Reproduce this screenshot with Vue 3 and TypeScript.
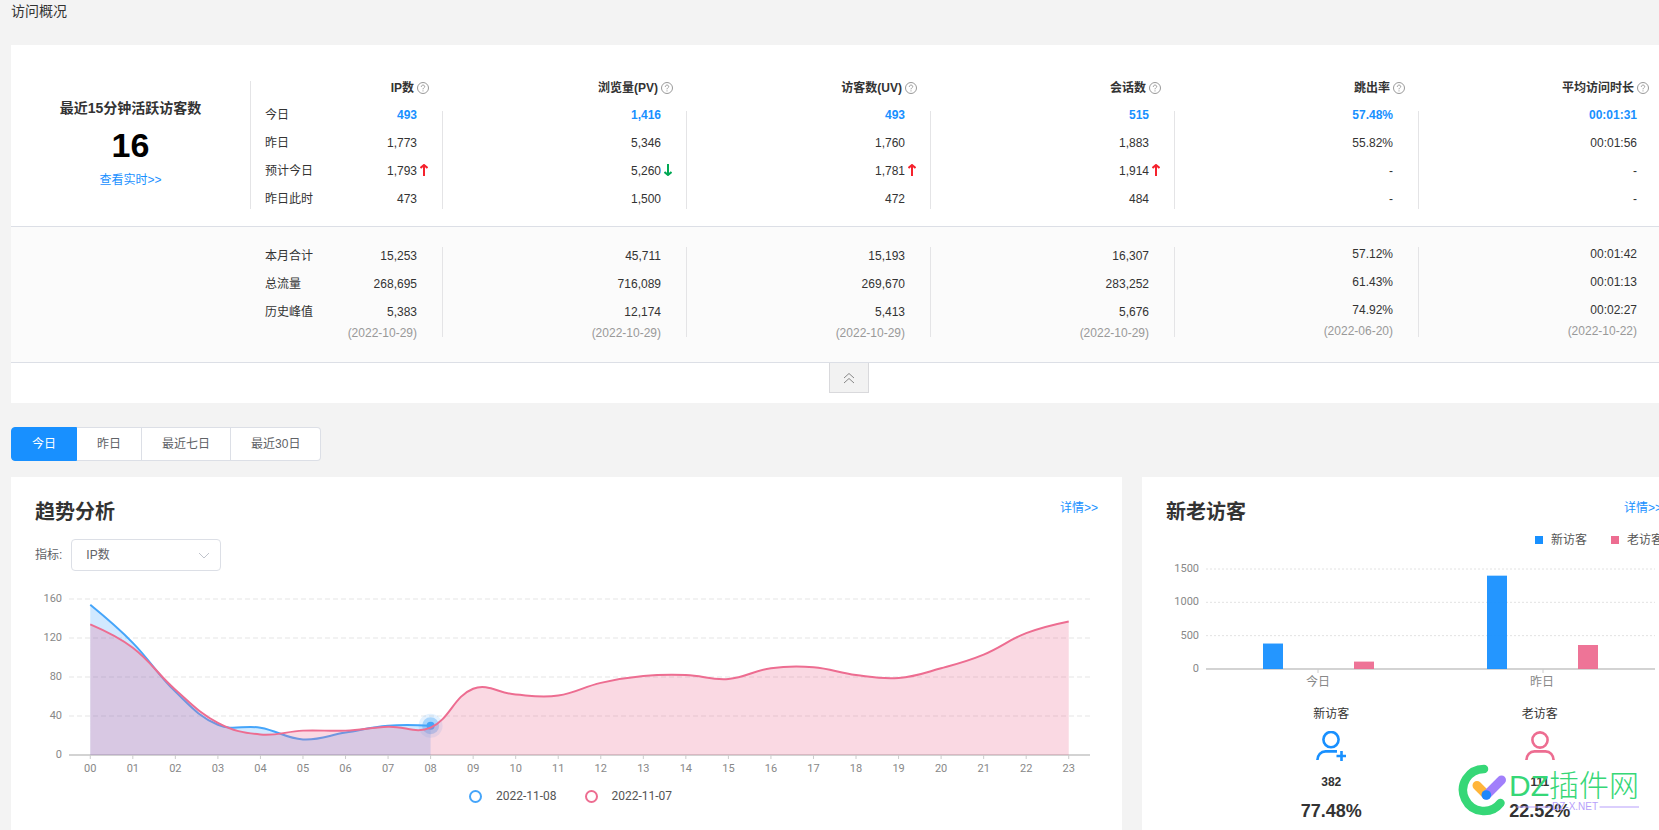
<script setup lang="ts">
import { ref } from 'vue'

type Trend = 'up' | 'down' | null

interface Metric {
  name: string
  recent: string[]
  trend: Trend
  totals: string[]
  peakDate: string
  rate?: boolean
}

const metrics: Metric[] = [
  { name: 'IP数', recent: ['493', '1,773', '1,793', '473'], trend: 'up', totals: ['15,253', '268,695', '5,383'], peakDate: '(2022-10-29)' },
  { name: '浏览量(PV)', recent: ['1,416', '5,346', '5,260', '1,500'], trend: 'down', totals: ['45,711', '716,089', '12,174'], peakDate: '(2022-10-29)' },
  { name: '访客数(UV)', recent: ['493', '1,760', '1,781', '472'], trend: 'up', totals: ['15,193', '269,670', '5,413'], peakDate: '(2022-10-29)' },
  { name: '会话数', recent: ['515', '1,883', '1,914', '484'], trend: 'up', totals: ['16,307', '283,252', '5,676'], peakDate: '(2022-10-29)' },
  { name: '跳出率', recent: ['57.48%', '55.82%', '-', '-'], trend: null, totals: ['57.12%', '61.43%', '74.92%'], peakDate: '(2022-06-20)', rate: true },
  { name: '平均访问时长', recent: ['00:01:31', '00:01:56', '-', '-'], trend: null, totals: ['00:01:42', '00:01:13', '00:02:27'], peakDate: '(2022-10-22)', rate: true },
]
const recentLabels = ['今日', '昨日', '预计今日', '昨日此时']
const totalLabels = ['本月合计', '总流量', '历史峰值']

const ranges = ['今日', '昨日', '最近七日', '最近30日']
const activeRange = ref('今日')
const indicator = ref('IP数')

/* Trend chart geometry, in viewBox units */
const left = 34
const right = 1055
const base = 170
const step = (right - left) / 24
const px = (i: number) => left + step * (i + 0.5)
const py = (v: number) => base - v * 0.975
const hours = Array.from({ length: 24 }, (_, i) => String(i).padStart(2, '0'))
const yTicks = [0, 40, 80, 120, 160]

const today = [154, 115, 65, 31, 28, 16, 23, 30, 30]
const yesterday = [134, 110, 67, 33, 21, 25, 25, 29, 28, 68, 62, 61, 74, 81, 82, 78, 89, 90, 82, 79, 89, 103, 125, 137]

function curve(values: number[]): string {
  const pts = values.map((v, i) => ({ x: px(i), y: py(v) }))
  const smooth = 0.4
  let d = `M${pts[0].x} ${pts[0].y}`
  let cx = pts[0].x
  let cy = pts[0].y
  for (let i = 1; i < pts.length; i++) {
    const a = pts[i - 1]
    const p = pts[i]
    const n = pts[i + 1]
    if (!n) {
      d += `C${cx} ${cy} ${p.x} ${p.y} ${p.x} ${p.y}`
      break
    }
    const before = Math.hypot(p.x - a.x, p.y - a.y)
    const after = Math.hypot(n.x - p.x, n.y - p.y)
    const ratio = after / (before + after)
    const vx = (n.x - a.x) * smooth
    const vy = (n.y - a.y) * smooth
    d += `C${cx} ${cy} ${p.x - vx * (1 - ratio)} ${p.y - vy * (1 - ratio)} ${p.x} ${p.y}`
    cx = p.x + vx * ratio
    cy = p.y + vy * ratio
  }
  return d
}
const area = (values: number[]) => `${curve(values)}L${px(values.length - 1)} ${base}L${px(0)} ${base}Z`

/* Visitor bars */
const barTicks = [0, 500, 1000, 1500]
const barY = (v: number) => 113 - v / 15
const bars = [
  { x: 97, value: 382, color: '#1890ff' },
  { x: 188, value: 111, color: '#ed6d91' },
  { x: 321, value: 1400, color: '#1890ff' },
  { x: 412, value: 360, color: '#ed6d91' },
]
</script>

<template>
  <div class="page">
    <main class="content">
      <h1 class="page-title">访问概况</h1>

      <section class="card overview">
        <div class="recent">
          <div class="active-now">
            <h2>最近15分钟活跃访客数</h2>
            <strong>16</strong>
            <a href="#realtime">查看实时&gt;&gt;</a>
          </div>
          <table class="stats">
            <colgroup><col class="c-label"><col class="c-first"><col v-for="n in 5" :key="n"></colgroup>
            <thead>
              <tr>
                <td></td>
                <th v-for="m in metrics" :key="m.name" scope="col">
                  <span class="head">{{ m.name }}
                    <svg class="help" viewBox="0 0 12 12" aria-hidden="true">
                      <circle cx="6" cy="6" r="5.5" />
                      <path d="M4.3 4.8C4.3 2.5 7.8 2.6 7.7 4.7C7.6 5.8 6 6 6 7.3M6 8.4V9.4" />
                    </svg>
                  </span>
                </th>
              </tr>
            </thead>
            <tbody>
              <tr v-for="(label, r) in recentLabels" :key="label">
                <th scope="row">{{ label }}</th>
                <td v-for="m in metrics" :key="m.name" :class="{ now: r === 0 }">
                  <span class="value">{{ m.recent[r] }}<svg v-if="r === 2 && m.trend" :class="['arrow', m.trend]" viewBox="0 0 8 12" aria-hidden="true"><path d="M4 12V1.5M0.5 4L4 1L7.5 4" /></svg></span>
                </td>
              </tr>
            </tbody>
          </table>
        </div>

        <div class="totals">
          <table class="stats">
            <colgroup><col class="c-label"><col class="c-first"><col v-for="n in 5" :key="n"></colgroup>
            <tbody>
              <tr v-for="(label, r) in totalLabels" :key="label">
                <th scope="row">{{ label }}</th>
                <td v-for="m in metrics" :key="m.name" :class="{ rate: m.rate }">{{ m.totals[r] }}</td>
              </tr>
              <tr class="dates">
                <td class="blank"></td>
                <td v-for="m in metrics" :key="m.name" :class="{ rate: m.rate }"><div class="date">{{ m.peakDate }}</div></td>
              </tr>
            </tbody>
          </table>
        </div>

        <div class="fold">
          <button type="button" aria-label="收起">
            <svg viewBox="0 0 12 12" aria-hidden="true"><path d="M1 6L6 1.5L11 6M1 11L6 6.5L11 11" /></svg>
          </button>
        </div>
      </section>

      <div class="ranges">
        <button v-for="r in ranges" :key="r" type="button" :class="{ on: r === activeRange }" @click="activeRange = r">{{ r }}</button>
      </div>

      <div class="panels">
        <section class="card panel">
          <header>
            <h2>趋势分析</h2>
            <a href="#trend">详情&gt;&gt;</a>
          </header>
          <div class="filter">
            <label for="indicator">指标:</label>
            <div class="select">
              <select id="indicator" v-model="indicator">
                <option v-for="m in metrics" :key="m.name">{{ m.name }}</option>
              </select>
              <svg viewBox="0 0 12 7" aria-hidden="true"><path d="M1 1L6 6L11 1" /></svg>
            </div>
          </div>
          <svg class="chart trend" viewBox="0 0 1063 195" role="img" aria-label="趋势分析">
            <g v-for="t in yTicks" :key="t">
              <line v-if="t" class="grid" :x1="left" :x2="right" :y1="py(t)" :y2="py(t)" />
              <text x="27" :y="py(t) + 3" text-anchor="end">{{ t }}</text>
            </g>
            <line class="axis" :x1="left" :x2="right" :y1="base" :y2="base" />
            <g v-for="(h, i) in hours" :key="h">
              <line class="tick" :x1="px(i)" :x2="px(i)" :y1="base" :y2="base + 4" />
              <text :x="px(i)" y="187" text-anchor="middle">{{ h }}</text>
            </g>
            <path :d="area(today)" fill="#1890ff" fill-opacity="0.2" />
            <path :d="curve(today)" class="line blue" />
            <circle :cx="px(8)" :cy="py(30)" r="12" fill="#45a5fa" fill-opacity="0.14" />
            <circle :cx="px(8)" :cy="py(30)" r="8.5" fill="#45a5fa" fill-opacity="0.38" />
            <circle :cx="px(8)" :cy="py(30)" r="4" fill="#45a5fa" />
            <path :d="area(yesterday)" fill="#ed6d91" fill-opacity="0.26" />
            <path :d="curve(yesterday)" class="line pink" />
          </svg>
          <div class="legend dates-legend">
            <span><i class="ring blue"></i>2022-11-08</span>
            <span><i class="ring pink"></i>2022-11-07</span>
          </div>
        </section>

        <section class="card panel">
          <header>
            <h2>新老访客</h2>
            <a href="#visitors">详情&gt;&gt;</a>
          </header>
          <div class="legend bar-legend">
            <span><i class="square blue"></i>新访客</span>
            <span><i class="square pink"></i>老访客</span>
          </div>
          <svg class="chart visitors" viewBox="0 0 496 140" role="img" aria-label="新老访客">
            <g v-for="t in barTicks" :key="t">
              <line v-if="t" class="dots" x1="40" x2="489" :y1="barY(t)" :y2="barY(t)" />
              <text x="33" :y="barY(t) + 3" text-anchor="end">{{ t }}</text>
            </g>
            <line class="axis" x1="40" x2="489" y1="113" y2="113" />
            <line class="tick" x1="152" x2="152" y1="113" y2="117" />
            <line class="tick" x1="377" x2="377" y1="113" y2="117" />
            <rect v-for="b in bars" :key="b.x" :x="b.x" :y="barY(b.value)" width="20" :height="113 - barY(b.value)" :fill="b.color" fill-opacity="0.95" />
            <text class="cn" x="152" y="130" text-anchor="middle">今日</text>
            <text class="cn" x="376" y="130" text-anchor="middle">昨日</text>
          </svg>
          <div class="split">
            <div>
              <span>新访客</span>
              <svg viewBox="0 0 30 30" class="person blue" aria-hidden="true">
                <circle cx="15" cy="8.6" r="7.6" /><path d="M1.4 29C1.6 24.3 4.8 20.4 9.5 20.4H21M25.5 20V30M20.5 25H30" />
              </svg>
              <b>382</b>
              <strong>77.48%</strong>
            </div>
            <div>
              <span>老访客</span>
              <svg viewBox="0 0 30 30" class="person pink" aria-hidden="true">
                <circle cx="15" cy="9" r="7.6" /><path d="M1.4 29C1.6 24.3 4.8 20.4 9.5 20.4H20.5C25.2 20.4 28.4 24.3 28.6 29" />
              </svg>
              <b>111</b>
              <strong>22.52%</strong>
            </div>
          </div>
        </section>
      </div>
    </main>

    <svg class="brand" viewBox="0 0 182 54" aria-label="DZ插件网">
      <path d="M27 7A21 21 0 1 0 43.500 41" stroke="#36d777" stroke-width="8.500" />
      <path d="M20 23.500L28.500 32" stroke="#ffb53a" stroke-width="9" />
      <path d="M29.500 33L44.500 18" stroke="#a17ffb" stroke-width="9" />
      <circle cx="29.300" cy="33" r="4.800" fill="#1b87fb" />
      <text x="52" y="34" class="name">DZ插件网</text>
      <path d="M60 45H94M143 45H182" stroke="#b79ffb" stroke-width="1" />
      <text x="95" y="48" class="site">DZ-X.NET</text>
    </svg>
  </div>
</template>

<style>
body { margin: 0; background: #f3f3f3; }
</style>

<style scoped>
.page {
  position: relative;
  min-height: 100vh;
  display: flex;
  overflow: hidden;
  background: #f3f3f3;
  color: #333;
  font: 12px/20px "Liberation Sans", "Noto Sans CJK SC", sans-serif;
}
.content {
  flex: 1;
  min-width: 0;
  display: flex;
  flex-direction: column;
  margin: 0 -27px 0 11px;
}
h1, h2 { margin: 0; }
a { color: #1890ff; text-decoration: none; }
button, select { font: inherit; color: inherit; }
.page-title { font-size: 14px; font-weight: 400; line-height: 22px; padding-bottom: 23px; }
.card { background: #fff; }

.recent { display: flex; padding: 36px 23px 17px 0; }
.active-now {
  box-sizing: border-box;
  flex: 0 0 240px;
  display: flex;
  flex-direction: column;
  align-items: center;
  padding-top: 17px;
  border-right: 1px solid #e4e4e6;
}
.active-now h2 { font-size: 14px; }
.active-now strong { color: #000; font-size: 34px; line-height: 46px; padding: 4px 0 2px; }

.stats { flex: 1; width: 100%; table-layout: fixed; border-collapse: separate; border-spacing: 0; }
.stats th, .stats td { padding: 0; vertical-align: top; text-align: right; white-space: nowrap; }
.c-label { width: 80px; }
.c-first { width: 112px; }
.stats thead tr { height: 30px; }
.stats thead th { line-height: 14px; padding-right: 14px; }
.head { display: inline-flex; align-items: center; gap: 3px; }
.help { width: 12px; height: 12px; fill: none; stroke: #999; stroke-width: 1; }
.stats tbody tr { height: 28px; }
.stats tbody th { text-align: left; font-weight: 400; padding-left: 14px; }
.stats tbody td { padding-right: 25px; border-right: 1px solid #e4e4e6; }
.recent tbody th, .recent tbody td { line-height: 8px; }
.recent tbody tr:last-child { height: 14px; }
.stats .now { color: #1890ff; font-weight: 700; }
.value { position: relative; }
.arrow { position: absolute; left: 100%; top: 0; margin-left: 3px; width: 8px; height: 12px; fill: none; stroke-width: 2; }
.arrow.up { stroke: #f5222d; }
.arrow.down { stroke: #00a854; transform: rotate(180deg); }

.totals { padding: 20px 23px 25px 240px; height: 90px; background: #fbfbfb; border: solid #dcdfe6; border-width: 1px 0; }
.totals th, .totals td { line-height: 18px; }
.totals .rate { line-height: 14px; }
.totals tr:nth-child(3) { height: 22px; }
.totals .dates { height: 12px; color: #999; }
.totals .blank { padding: 0; border: 0; line-height: 12px; }
.date { height: 12px; line-height: 16px; }
.rate .date { line-height: 12px; }

.fold { display: flex; justify-content: center; height: 40px; }
.fold button { width: 40px; height: 30px; padding: 0; border: 1px solid #d9d9dc; border-top: 0; background: #f2f2f2; }
.fold svg { display: block; margin: auto; width: 12px; height: 12px; fill: none; stroke: #888; }

.ranges { display: flex; padding: 24px 0 16px; }
.ranges button {
  height: 34px;
  padding: 0 20px;
  border: 1px solid #dcdfe6;
  border-left-width: 0;
  background: #fff;
  color: #606266;
}
.ranges button:first-child { border-left-width: 1px; border-radius: 4px 0 0 4px; }
.ranges button:last-child { border-radius: 0 4px 4px 0; }
.ranges button.on { background: #1890ff; border-color: #1890ff; color: #fff; }

.panels { flex: 1; display: grid; grid-template-columns: 1111fr 544fr; gap: 20px; }
.panel { min-width: 0; padding: 20px 24px 0; }
.panel header { display: flex; justify-content: space-between; height: 28px; }
.panel h2 { font-size: 20px; line-height: 30px; }
.panel header a { line-height: 22px; }
.filter { display: flex; align-items: center; gap: 9px; margin: 14px 0; color: #606266; }
.select { position: relative; }
.select select {
  display: block;
  width: 150px;
  height: 32px;
  padding: 0 14px;
  border: 1px solid #dcdfe6;
  border-radius: 4px;
  background: #fff;
  appearance: none;
}
.select svg { position: absolute; right: 11px; top: 13px; width: 12px; height: 7px; fill: none; stroke: #c0c4cc; pointer-events: none; }

.chart { display: block; width: 100%; height: auto; }
.chart text { font: 11px Roboto, sans-serif; fill: #888; }
.chart text.cn { font: 12px "Noto Sans CJK SC", sans-serif; }
.grid { stroke: #f2f2f2; stroke-width: 2; stroke-dasharray: 5 3; }
.dots { stroke: #e2e2e2; stroke-width: 1; stroke-dasharray: 2 2; }
.axis { stroke: #d3d3d3; stroke-width: 2; }
.tick { stroke: #ccc; stroke-width: 1; }
.line { fill: none; stroke-width: 2; }
.line.blue { stroke: #45a5fa; }
.line.pink { stroke: #ed6d91; }

.legend { display: flex; color: #555; }
.legend span { display: flex; align-items: center; }
.dates-legend { justify-content: center; gap: 28px; margin: 6px 0 0 8px; font: 12px/20px Roboto, sans-serif; }
.ring { width: 9px; height: 9px; margin-right: 14px; border: 2px solid; border-radius: 50%; }
.ring.blue { border-color: #45a5fa; }
.ring.pink { border-color: #ed6d91; }
.bar-legend { justify-content: flex-end; gap: 24px; line-height: 16px; margin: 7px -1px 8px 0; }
.square { width: 8px; height: 8px; margin-right: 8px; }
.square.blue { background: #1890ff; }
.square.pink { background: #ed6d91; }

.split { display: grid; grid-template-columns: 1fr 1fr; padding: 10px 18px 0 61px; }
.split div { display: flex; flex-direction: column; align-items: center; line-height: 16px; }
.person { width: 30px; height: 30px; margin: 9px 0 11px; fill: none; stroke-width: 2.6; }
.person.blue { stroke: #1890ff; }
.person.pink { stroke: #ed6d91; }
.split b { line-height: 20px; }
.split strong { font-size: 18px; line-height: 24px; margin-top: 7px; }

.brand { position: absolute; right: 20px; bottom: 14px; width: 182px; height: 54px; fill: none; stroke-linecap: round; pointer-events: none; }
.brand .name { font: 300 30px "Liberation Sans", "Noto Sans CJK SC", sans-serif; fill: #36d777; }
.brand .site { font: 10px "Liberation Sans", sans-serif; fill: #b79ffb; }
</style>
